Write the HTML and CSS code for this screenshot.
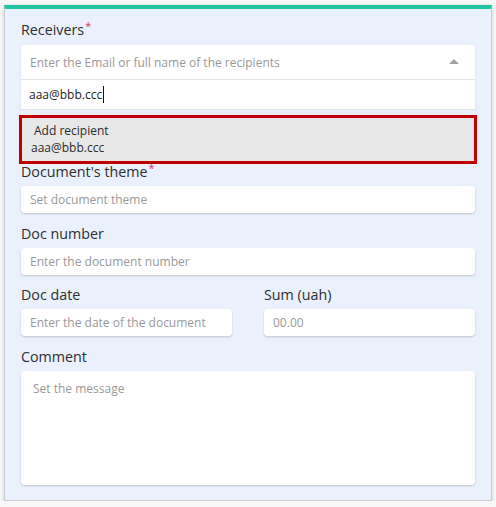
FILE: index.html
```html
<!DOCTYPE html>
<html>
<head>
<meta charset="utf-8">
<link rel="stylesheet" href="styles.css">
</head>
<body>
<div class="panel">
  <div class="field receivers">
    <div class="label">Receivers<span class="req">*</span></div>
    <div class="select">
      <div class="select-head">
        <span class="ph">Enter the Email or full name of the recipients</span>
        <span class="arrow"></span>
      </div>
      <div class="search"><span class="typed">aaa@bbb.ccc</span><span class="caret"></span></div>
      <div class="list">
        <div class="option">
          <div class="opt-title">Add recipient</div>
          <div class="opt-value">aaa@bbb.ccc</div>
        </div>
      </div>
    </div>
  </div>
  <div class="field">
    <div class="label">Document's theme<span class="req">*</span></div>
    <div class="input"><span class="ph">Set document theme</span></div>
  </div>
  <div class="field docnum">
    <div class="label">Doc number</div>
    <div class="input"><span class="ph">Enter the document number</span></div>
  </div>
  <div class="row">
    <div class="field">
      <div class="label">Doc date</div>
      <div class="input"><span class="ph">Enter the date of the document</span></div>
    </div>
    <div class="field">
      <div class="label">Sum (uah)</div>
      <div class="input"><span class="ph">00.00</span></div>
    </div>
  </div>
  <div class="field last">
    <div class="label">Comment</div>
    <div class="textarea"><span class="ph">Set the message</span></div>
  </div>
</div>
</body>
</html>
```
FILE: styles.css
```css
html, body {
  margin: 0;
  padding: 0;
  background: #f8f8f8;
  font-family: "Open Sans", "Noto Sans", sans-serif;
}
.panel {
  box-sizing: border-box;
  width: 488px;
  margin: 5px 0 0 4px;
  background: #eaf1fc;
  border: 1px solid #c9ccd2;
  border-top: 4px solid #22c3a1;
  padding: 11px 16px 15px;
  box-shadow: 0 1px 4px rgba(0, 0, 0, 0.18);
}
.field {
  margin-bottom: 11px;
}
.field.docnum {
  margin-bottom: 10px;
}
.field.receivers {
  margin-bottom: 0;
}
.field.last {
  margin-bottom: 0;
}
.label {
  font-size: 14.3px;
  line-height: 20px;
  color: #2e2e2e;
  margin-bottom: 4px;
}
.receivers .label {
  margin-bottom: 5px;
}
.req {
  color: #e2306c;
  font-size: 11px;
  vertical-align: top;
  line-height: 12px;
  margin-left: 1px;
}
.ph {
  color: #999;
  font-size: 12px;
}
.select {
  background: #fff;
  border-radius: 4px 4px 0 0;
  box-shadow: 0 1px 2px rgba(0, 0, 0, 0.12);
}
.select-head {
  height: 34px;
  border-bottom: 1px solid #e4e4e4;
  display: flex;
  align-items: center;
  justify-content: space-between;
  padding: 0 16px 0 9px;
}
.arrow {
  width: 0;
  height: 0;
  border-left: 5px solid transparent;
  border-right: 5px solid transparent;
  border-bottom: 5px solid #a3a3a3;
  margin-top: -1px;
}
.search {
  height: 29px;
  border-bottom: 1px solid #e4e4e4;
  display: flex;
  align-items: center;
  padding-left: 8px;
}
.typed {
  font-size: 12px;
  color: #222;
}
.caret {
  width: 1px;
  height: 17px;
  background: #111;
  margin-left: 1px;
}
.list {
  padding: 8px 1px 1px;
  background: #eaf1fc;
}
.option {
  background: #e8e8e8;
  outline: 3px solid #c00000;
  height: 43px;
  padding: 4px 9px 0;
  box-sizing: border-box;
  font-size: 12px;
  line-height: 17px;
  color: #2a2a2a;
}
.opt-title {
  padding-left: 3px;
}
.input {
  box-sizing: border-box;
  height: 27px;
  background: #fff;
  border-radius: 4px;
  box-shadow: 0 1px 2px rgba(0, 0, 0, 0.18);
  display: flex;
  align-items: center;
  padding-left: 9px;
}
.row {
  display: grid;
  grid-template-columns: 1fr 1fr;
  column-gap: 32px;
}
.textarea {
  box-sizing: border-box;
  height: 114px;
  background: #fff;
  border-radius: 4px;
  box-shadow: 0 1px 2px rgba(0, 0, 0, 0.18);
  padding: 6px 12px;
  line-height: 20px;
}
```
